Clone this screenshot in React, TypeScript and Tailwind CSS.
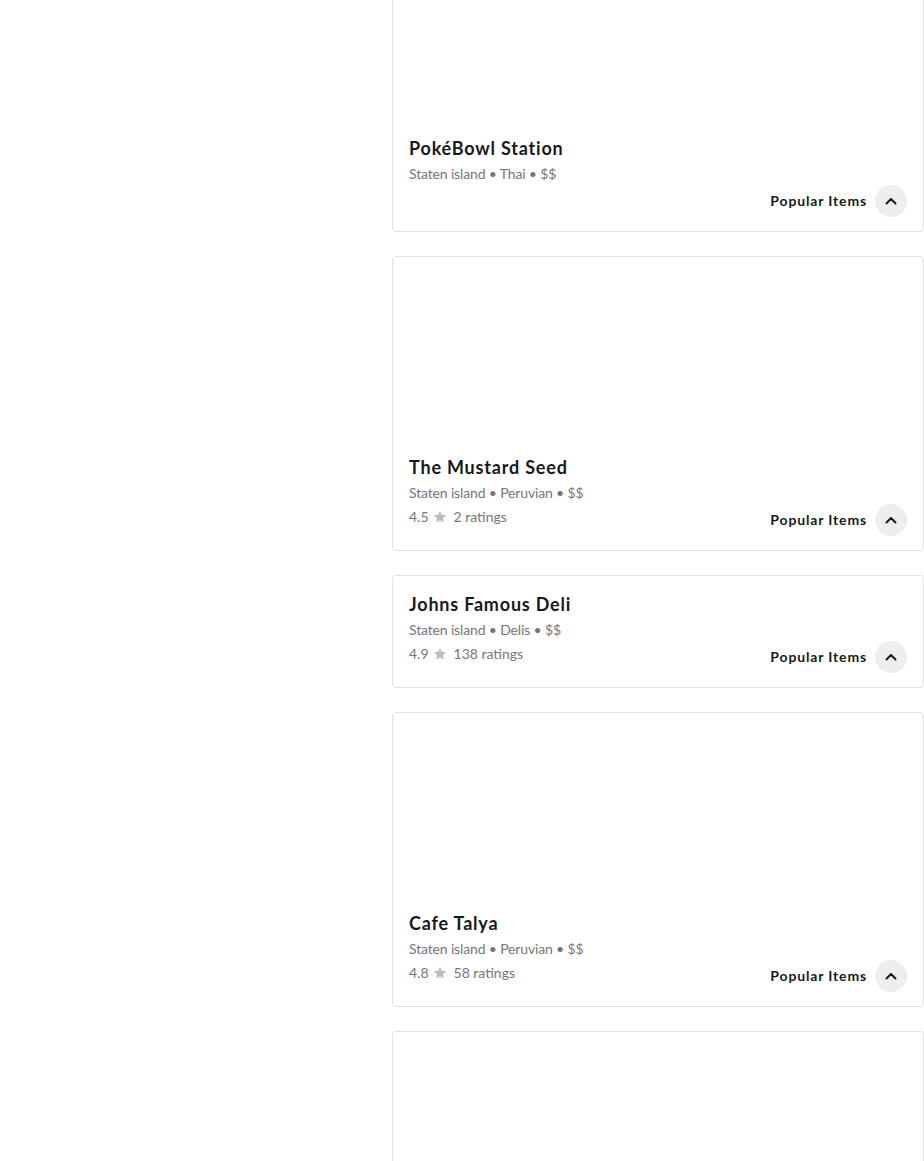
import React from "react";

type Store = {
  name: string;
  meta: string;
  hasImage: boolean;
  rating?: string;
  count?: string;
};

const stores: Store[] = [
  { name: "PokéBowl Station", meta: "Staten island • Thai • $$", hasImage: true },
  { name: "The Mustard Seed", meta: "Staten island • Peruvian • $$", hasImage: true, rating: "4.5", count: "2 ratings" },
  { name: "Johns Famous Deli", meta: "Staten island • Delis • $$", hasImage: false, rating: "4.9", count: "138 ratings" },
  { name: "Cafe Talya", meta: "Staten island • Peruvian • $$", hasImage: true, rating: "4.8", count: "58 ratings" },
  { name: "Loading", meta: "", hasImage: true },
];

function Star() {
  return (
    <svg width="14" height="14" viewBox="0 0 24 24" className="fill-[#bdbdbd]">
      <path d="M12 1.5l3.2 6.7 7.3.9-5.4 5.1 1.4 7.3L12 18l-6.5 3.5 1.4-7.3-5.4-5.1 7.3-.9z" />
    </svg>
  );
}

function Chevron() {
  return (
    <svg width="12" height="8" viewBox="0 0 12 8" fill="none">
      <path d="M1.5 6.5 6 2l4.5 4.5" stroke="#191919" strokeWidth="2" strokeLinecap="round" strokeLinejoin="round" />
    </svg>
  );
}

function StoreCard({ s }: { s: Store }) {
  return (
    <div className="border border-[#e2e2e2] rounded-[4px] bg-white overflow-hidden">
      {s.hasImage && <div className="h-[182px] bg-white" />}
      {s.meta ? (
        <div className="px-4 pt-4 pb-[15px]">
          <div className="text-[18px] leading-6 font-bold text-[#191919] tracking-[0.8px]">{s.name}</div>
          <div className="mt-1 text-[14px] leading-5 text-[#767676] tracking-[-0.15px]">{s.meta}</div>
          <div className="flex items-start justify-between h-8">
            <div className="pt-1">
              {s.rating && (
                <div className="flex items-center gap-1 text-[14px] leading-5 text-[#767676]">
                  <span>{s.rating}</span>
                  <Star />
                  <span className="ml-[3px]">{s.count}</span>
                </div>
              )}
            </div>
            <button className="flex items-center gap-2 mt-[1px]">
              <span className="text-[14px] leading-5 font-bold text-[#191919] tracking-[0.85px]">Popular Items</span>
              <span className="w-8 h-8 rounded-full bg-[#eeeeee] flex items-center justify-center">
                <Chevron />
              </span>
            </button>
          </div>
        </div>
      ) : (
        <div className="h-[113px]" />
      )}
    </div>
  );
}

export default function App() {
  return (
    <div className="w-[924px] h-[1161px] overflow-hidden bg-white font-['Lato',sans-serif]">
      <div className="flex">
        <div className="w-[392px] shrink-0" />
        <div className="flex-1 flex flex-col gap-6 -mt-[63px]">
          {stores.map((s) => (
            <StoreCard key={s.name} s={s} />
          ))}
        </div>
      </div>
    </div>
  );
}
